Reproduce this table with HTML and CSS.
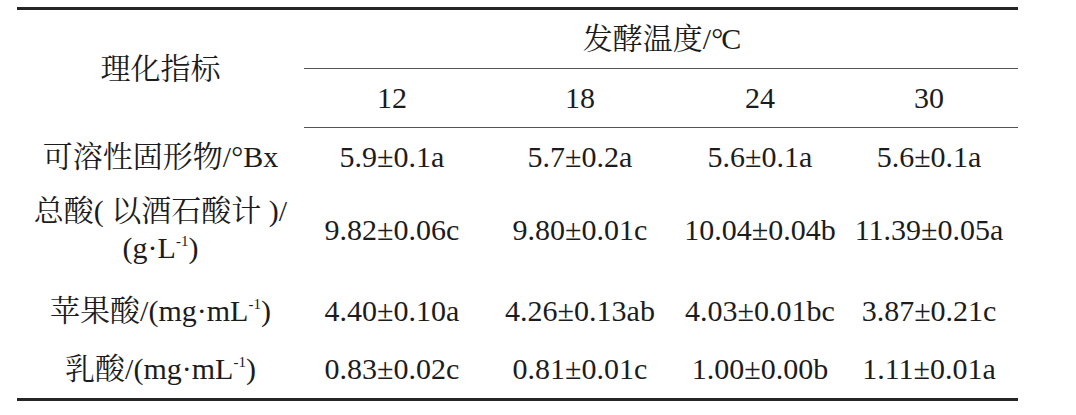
FILE: index.html
```html
<!DOCTYPE html>
<html>
<head>
<meta charset="utf-8">
<title>理化指标</title>
<link rel="stylesheet" href="styles.css">
</head>
<body>
<table class="data-table">
  <colgroup>
    <col class="col-label">
    <col class="col-a">
    <col class="col-b">
    <col class="col-c">
    <col class="col-d">
  </colgroup>
  <thead>
    <tr class="head-row head-row--top">
      <th rowspan="2" class="label-head">理化指标</th>
      <th colspan="4" class="group-head">发酵温度/<span class="deg">°C</span></th>
    </tr>
    <tr class="head-row head-row--sub">
      <th>12</th>
      <th>18</th>
      <th>24</th>
      <th>30</th>
    </tr>
  </thead>
  <tbody>
    <tr class="body-row">
      <td class="label">可溶性固形物/°Bx</td>
      <td>5.9±0.1a</td>
      <td>5.7±0.2a</td>
      <td>5.6±0.1a</td>
      <td>5.6±0.1a</td>
    </tr>
    <tr class="body-row body-row--double">
      <td class="label">总酸( 以酒石酸计 )/<br>(g·L<sup>-1</sup>)</td>
      <td>9.82±0.06c</td>
      <td>9.80±0.01c</td>
      <td>10.04±0.04b</td>
      <td>11.39±0.05a</td>
    </tr>
    <tr class="body-row">
      <td class="label">苹果酸/(mg·mL<sup>-1</sup>)</td>
      <td>4.40±0.10a</td>
      <td>4.26±0.13ab</td>
      <td>4.03±0.01bc</td>
      <td>3.87±0.21c</td>
    </tr>
    <tr class="body-row body-row--last">
      <td class="label">乳酸/(mg·mL<sup>-1</sup>)</td>
      <td>0.83±0.02c</td>
      <td>0.81±0.01c</td>
      <td>1.00±0.00b</td>
      <td>1.11±0.01a</td>
    </tr>
  </tbody>
</table>
</body>
</html>
```

FILE: styles.css
```css
html, body {
  margin: 0;
  padding: 0;
  background: #ffffff;
}

body {
  padding: 7px 0 0 17px;
  font-family: "Liberation Serif", "Noto Serif CJK SC", "Noto Sans CJK SC", serif;
  font-size: 30px;
  color: #1c1c1c;
}

.data-table {
  width: 1001px;
  table-layout: fixed;
  border-collapse: collapse;
  border-top: 3px solid #262626;
  border-bottom: 3px solid #262626;
}

.col-label { width: 287px; }
.col-a { width: 176px; }
.col-b { width: 200px; }
.col-c { width: 160px; }
.col-d { width: 178px; }

.data-table th,
.data-table td {
  font-family: inherit;
  font-size: inherit;
  font-weight: normal;
  text-align: center;
  vertical-align: middle;
  padding: 11px 0;
  line-height: 36px;
  white-space: nowrap;
}

.head-row--top .group-head {
  border-bottom: 1px solid #555555;
}

.head-row--sub th {
  border-bottom: 1px solid #555555;
}

.body-row--double td {
  padding-top: 6px;
  padding-bottom: 16px;
  line-height: 37px;
}

.deg {
  letter-spacing: -2px;
}

sup {
  font-size: 15px;
  line-height: 0;
  vertical-align: 12px;
}
```
